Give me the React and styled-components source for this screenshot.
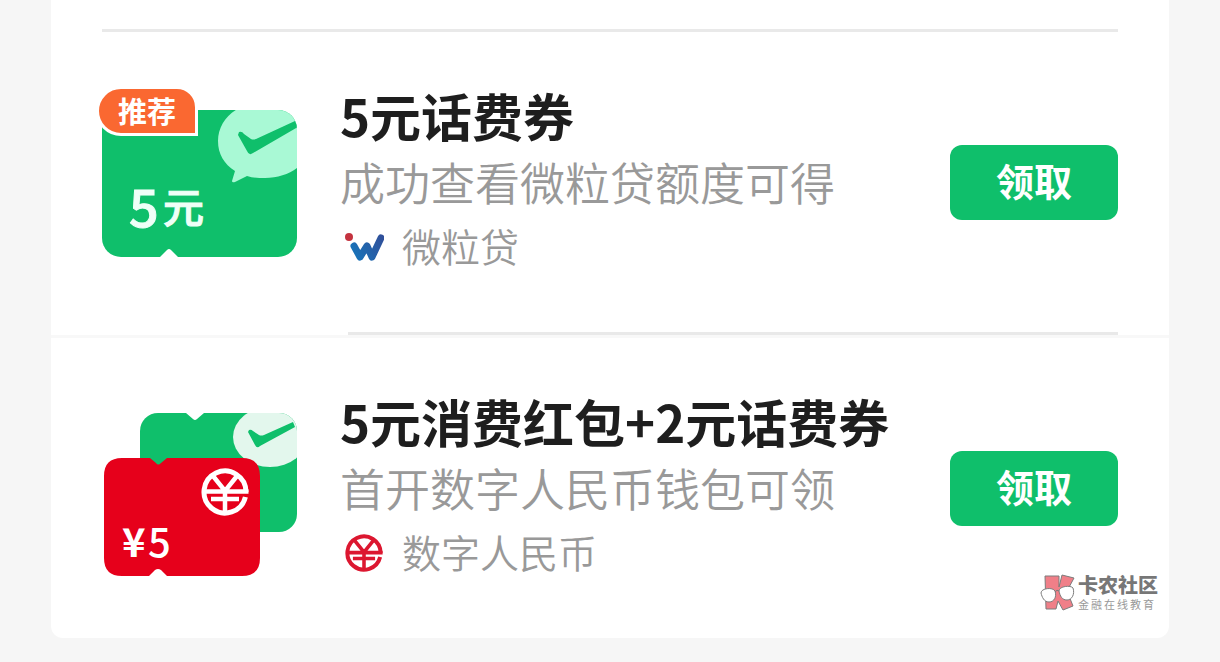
import React from "react";
import styled, { createGlobalStyle } from "styled-components";

const GlobalStyle = createGlobalStyle`
  * { box-sizing: border-box; }
  body {
    margin: 0;
    background: #f6f6f6;
    font-family: "Noto Sans CJK SC", "Noto Sans", sans-serif;
    color: #1e1e1e;
  }
  h2, p, ul { margin: 0; padding: 0; }
`;

const Page = styled.main`
  padding: 0 51px 24px;
`;

const Card = styled.section`
  position: relative;
  padding-top: 29px;
  background: #ffffff;
  border-radius: 0 0 12px 12px;
`;

const Divider = styled.div`
  height: 3px;
  margin-left: ${(p) => (p.$inset ? "297px" : "51px")};
  margin-right: 51px;
  background: #e9e9e9;
`;

const Seam = styled.div`
  height: 3px;
  background: #f8f8f8;
`;

const List = styled.ul`
  list-style: none;
`;

const Coupon = styled.li`
  display: flex;
  align-items: center;
  gap: 43px;
  min-height: 300px;
  padding: 0 51px;
`;

const Art = styled.div`
  position: relative;
  flex: none;
  width: 195px;
  padding-top: 2px;

  svg {
    display: block;
    overflow: visible;
  }
`;

const Badge = styled.span`
  position: absolute;
  top: -22px;
  left: -6px;
  padding: 0 19px 2px;
  border: 3px solid #ffffff;
  border-radius: 26px 22px 0 26px;
  background: #fa6831;
  color: #ffffff;
  font-size: 29px;
  font-weight: 700;
  line-height: 42px;
`;

const Info = styled.div`
  flex: 1;
  min-width: 0;
  padding-bottom: 8px;
`;

const Title = styled.h2`
  font-size: 51px;
  font-weight: 700;
  line-height: 68px;
  white-space: nowrap;
`;

const Detail = styled.p`
  color: #999999;
  font-size: 45px;
  font-weight: 350;
  line-height: 66px;
  white-space: nowrap;
`;

const Source = styled.p`
  display: flex;
  align-items: center;
  gap: 18px;
  padding-left: 4px;
  color: #999999;
  font-size: 39px;
  font-weight: 350;
  line-height: 60px;
`;

const SourceLogo = styled.span`
  display: flex;
  justify-content: center;
  width: 40px;
  padding-top: 4px;
`;

const ClaimButton = styled.button`
  flex: none;
  width: 168px;
  height: 75px;
  padding: 0 0 6px;
  border: 0;
  border-radius: 12px;
  background: #0fbf6b;
  color: #ffffff;
  font-family: inherit;
  font-size: 38px;
  font-weight: 700;
  line-height: 69px;
  cursor: pointer;
`;

const Watermark = styled.div`
  position: absolute;
  right: 11px;
  bottom: 26px;
  display: flex;
  align-items: center;
  gap: 3px;
`;

const MarkName = styled.div`
  color: #777777;
  font-size: 20px;
  font-weight: 900;
  line-height: 22px;
`;

const MarkTagline = styled.div`
  color: #999999;
  font-size: 11px;
  line-height: 16px;
  letter-spacing: 2px;
`;

function YuanEmblem({ size, color, x, y }) {
  return (
    <svg x={x} y={y} width={size} height={size} viewBox="0 0 48 48" fill="none" stroke={color} strokeWidth="5" aria-hidden="true">
      <path d="M45 24A21 21 0 1 0 44.400 29" />
      <path d="M3 23.500H47.500M10 31H38M24 23V44M12 8L24 23L36 8" strokeWidth="4.500" />
    </svg>
  );
}

function PhoneTicket() {
  return (
    <svg width="195" height="147" viewBox="0 0 195 147" role="img" aria-label="5元">
      <defs>
        <clipPath id="phone-ticket">
          <rect width="195" height="147" rx="19" />
        </clipPath>
      </defs>
      <g clipPath="url(#phone-ticket)">
        <rect width="195" height="147" fill="#0fbf6b" />
        <path d="M58 147L65 140Q67 138 69 140L76 147Z" fill="#fff" />
        <path d="M163 -8C136 -8 116 9 116 31C116 44 122 54 133 61L130 71Q130 73 133 72L145 66C151 68 157 68 163 68C189 68 210 51 210 31C210 9 189 -8 163 -8Z" fill="#a9f9d5" />
        <path d="M137 22Q140 21 142 24L149 29Q151 30 154 29L193 11L196 17L151 43Q147 46 145 41L136 25Z" fill="#0fbf6b" />
      </g>
      <g fill="#effff7" stroke="#effff7" strokeWidth="1" fontWeight="500">
        <text x="27" y="117" fontSize="52">5</text>
        <text x="61" y="113" fontSize="41">元</text>
      </g>
    </svg>
  );
}

function WalletTickets() {
  return (
    <svg width="195" height="176" viewBox="0 -12 195 176" role="img" aria-label="¥5">
      <defs>
        <clipPath id="back-ticket">
          <rect x="38" width="157" height="119" rx="18" />
        </clipPath>
      </defs>
      <g clipPath="url(#back-ticket)">
        <rect x="38" width="157" height="119" fill="#0fbf6b" />
        <path d="M84 0L91 6Q93 8 95 6L102 0Z" fill="#fff" />
        <ellipse cx="168" cy="24" rx="37" ry="30" fill="#e3f7ed" />
        <path d="M147 17Q149 16 151 18L157 22Q159 23 162 22L191 9L193 14L158 33Q155 36 153 32L146 19Z" fill="#0fbf6b" />
      </g>
      <path d="M20 45H48L54 50Q56 53 59 50L65 45H140Q158 45 158 63V145Q158 163 140 163H65L59 157Q56 155 53 157L47 163H20Q2 163 2 145V63Q2 45 20 45Z" fill="#e6001b" />
      <YuanEmblem x={99} y={55} size={48} color="#fff" />
      <text y="144" fill="#fff" fontSize="40" fontWeight="700">
        <tspan x="20">¥</tspan>
        <tspan x="46" fontWeight="500">5</tspan>
      </text>
    </svg>
  );
}

function LoanLogo() {
  return (
    <svg width="40" height="36" viewBox="0 0 40 36" fill="none" aria-hidden="true">
      <defs>
        <linearGradient id="loan-blue" x1="4" y1="28" x2="38" y2="8" gradientUnits="userSpaceOnUse">
          <stop stopColor="#1479be" />
          <stop offset="1" stopColor="#30509a" />
        </linearGradient>
      </defs>
      <circle cx="5" cy="8" r="4" fill="#c4333f" />
      <path d="M10 17L16 28L23 17L28 28L37 9" stroke="url(#loan-blue)" strokeWidth="7" strokeLinecap="round" strokeLinejoin="round" />
    </svg>
  );
}

function KMark() {
  return (
    <svg width="35" height="38" viewBox="0 0 35 38" stroke="#7c7c7c" strokeLinejoin="round" aria-hidden="true">
      <path d="M5 2H19V13L22 1L34 4L27 17L33 32L23 36L18 27L16 35H6Z" fill="#f07f88" />
      <path d="M1 19C1 14 13 13 15 17C17 23 14 28 9 28C4 28 2 23 1 19Z" fill="#fff" />
      <path d="M19 17C19 12 31 11 33 14C35 20 32 26 27 26C22 26 20 22 19 17Z" fill="#fff" />
      <path d="M15 18Q17 15 19 17" fill="none" />
    </svg>
  );
}

const coupons = [
  {
    title: "5元话费券",
    detail: "成功查看微粒贷额度可得",
    source: "微粒贷",
    badge: "推荐",
    art: <PhoneTicket />,
    logo: <LoanLogo />,
  },
  {
    title: "5元消费红包+2元话费券",
    detail: "首开数字人民币钱包可领",
    source: "数字人民币",
    art: <WalletTickets />,
    logo: <YuanEmblem size={38} color="#dc1730" />,
  },
];

function CouponRow({ coupon }) {
  return (
    <Coupon>
      <Art>
        {coupon.art}
        {coupon.badge && <Badge>{coupon.badge}</Badge>}
      </Art>
      <Info>
        <Title>{coupon.title}</Title>
        <Detail>{coupon.detail}</Detail>
        <Source>
          <SourceLogo>{coupon.logo}</SourceLogo>
          {coupon.source}
        </Source>
      </Info>
      <ClaimButton type="button">领取</ClaimButton>
    </Coupon>
  );
}

export default function App() {
  return (
    <>
      <GlobalStyle />
      <Page>
        <Card>
          <Divider />
          <List>
            <CouponRow coupon={coupons[0]} />
            <Divider $inset as="li" aria-hidden="true" />
            <Seam as="li" aria-hidden="true" />
            <CouponRow coupon={coupons[1]} />
          </List>
          <Watermark>
            <KMark />
            <div>
              <MarkName>卡农社区</MarkName>
              <MarkTagline>金融在线教育</MarkTagline>
            </div>
          </Watermark>
        </Card>
      </Page>
    </>
  );
}
